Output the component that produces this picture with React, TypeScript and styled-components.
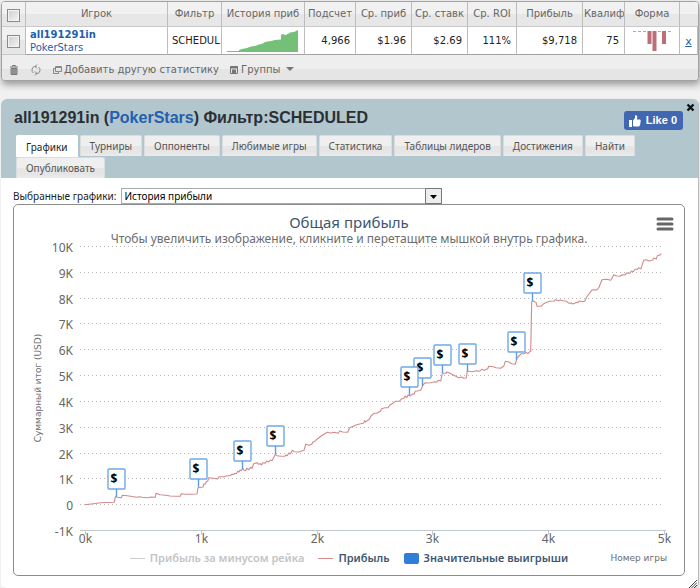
import React from 'react';
import styled, { createGlobalStyle } from 'styled-components';

const GlobalStyle = createGlobalStyle`
  *, *::before, *::after { box-sizing: border-box; }
  html { background: #f1f1f1; }
  body {
    margin: 0;
    font: 10px/12px 'DejaVu Sans', Verdana, sans-serif;
    color: #222;
    overflow-x: hidden;
  }
  a { color: #2360ad; }
`;

const Page = styled.main`
  padding: 1px 1px 0;
`;

/* ---------- player table ---------- */

const PlayerBox = styled.section`
  border: 1px solid #a2a2a2;
  border-radius: 4px;
  overflow: hidden;
  background: #e9e9e9;
  box-shadow: 1px 4px 7px rgba(0, 0, 0, 0.35);
`;

const PlayerTable = styled.table`
  width: 100%;
  table-layout: fixed;
  border-collapse: separate;
  border-spacing: 0;
  background: #fff;
`;

const HeadCell = styled.th`
  height: 25px;
  padding: 0 1px;
  border-right: 1px solid #bdbdbd;
  border-bottom: 1px solid #c9c9c9;
  background: linear-gradient(#f1f1f1 0 50%, #e7e7e7 50% 100%);
  color: #666;
  font-weight: 400;
  text-align: center;
  white-space: nowrap;
  overflow: hidden;
  &:last-child { border-right: 0; }
`;

const Cell = styled.td<{ $align?: 'left' | 'center' | 'right' }>`
  height: 28px;
  padding: 0 5px 0 4px;
  border-right: 1px solid #bdbdbd;
  border-bottom: 1px solid #a2a2a2;
  text-align: ${(p) => p.$align ?? 'right'};
  white-space: nowrap;
  overflow: hidden;
  &:last-child { padding: 2px 0 0; }
`;

const PlayerName = styled.a`
  display: block;
  line-height: 13px;
  font-weight: 700;
  text-decoration: none;
`;

const Network = styled.a`
  display: block;
  line-height: 13px;
  text-decoration: none;
`;

const Tick = styled.input`
  appearance: none;
  display: block;
  width: 13px;
  height: 13px;
  margin: 2px auto 0;
  border: 1px solid #8a8a8a;
  background: linear-gradient(135deg, #cdcdcd, #f6f6f6);
  box-shadow: inset 0 0 0 1px #f4f4f4;
  &:checked { background: #4c7fb8; }
`;

const CellGraphic = styled.svg`
  display: block;
  margin: 0 auto;
`;

const RemoveLink = styled.a`
  font-size: 11px;
`;

const Toolbar = styled.div`
  display: flex;
  align-items: center;
  gap: 10px;
  height: 25px;
  padding: 5px 6px 0;
  background: linear-gradient(#eeeeee 0 55%, #e5e5e5 55% 100%);
`;

const ToolButton = styled.button`
  display: flex;
  align-items: center;
  gap: 2px;
  padding: 0;
  border: 0;
  background: none;
  color: #666;
  font: inherit;
  cursor: pointer;
`;

/* ---------- detail panel ---------- */

const Panel = styled.section`
  position: relative;
  margin-top: 18px;
  margin-right: 1px;
  border-radius: 6px 6px 5px 5px;
  background: #fff;
  box-shadow: 1px 0 1px #b4b4b4;
`;

const PanelHeader = styled.header`
  padding: 7px 15px 0;
  border-radius: 6px 6px 0 0;
  background: #b2c6ce;
`;

const TitleRow = styled.div`
  display: flex;
  align-items: center;
  justify-content: space-between;
  height: 29px;
`;

const Title = styled.h1`
  margin: 0 0 6px -2px;
  font: 700 16px/20px 'Liberation Sans', Arial, sans-serif;
  color: #2b2f33;
  white-space: nowrap;
  a { text-decoration: none; }
`;

const LikeButton = styled.button`
  display: flex;
  align-items: center;
  gap: 5px;
  height: 19px;
  padding: 0 6px 0 5px;
  border: 0;
  border-radius: 3px;
  background: #4267b2;
  color: #fff;
  font: 700 11px/19px 'Liberation Sans', Arial, sans-serif;
  white-space: nowrap;
`;

const CloseButton = styled.button`
  position: absolute;
  top: 4px;
  right: 3px;
  display: flex;
  padding: 0;
  border: 0;
  background: none;
`;

const ResizeGrip = styled.svg`
  position: absolute;
  right: 1px;
  bottom: 0;
`;

const Tabs = styled.nav`
  display: flex;
  flex-wrap: wrap;
  gap: 1px 2px;
`;

const Tab = styled.button<{ $active?: boolean }>`
  height: ${(p) => (p.$active ? 22 : 21)}px;
  margin-bottom: ${(p) => (p.$active ? -1 : 0)}px;
  padding: 0 9px;
  border: 1px solid ${(p) => (p.$active ? '#fff' : '#dadcdd')};
  border-bottom-width: 0;
  border-radius: 2px 2px 0 0;
  background: ${(p) => (p.$active ? '#fff' : 'linear-gradient(#efefef 0 50%, #e5e5e5 50% 80%, #ececec)')};
  color: ${(p) => (p.$active ? '#222' : '#555')};
  font: 10px/14px 'Noto Sans', Tahoma, sans-serif;
`;

const PanelBody = styled.div`
  padding: 9px 13px 12px 12px;
`;

const ChartPicker = styled.div`
  display: flex;
  align-items: center;
  gap: 5px;
  height: 17px;
  font: 10px/14px 'Noto Sans', Tahoma, sans-serif;
`;

const SelectFrame = styled.div`
  position: relative;
  flex: 0 1 321px;
  display: flex;
`;

const Select = styled.select`
  appearance: none;
  width: 100%;
  height: 16px;
  padding: 0 20px 0 2px;
  border: 1px solid #aaa;
  border-radius: 0;
  background: #fff;
  color: #000;
  font: inherit;
`;

const SelectArrow = styled.svg`
  position: absolute;
  right: 0;
  top: 0;
  pointer-events: none;
`;

const ChartCard = styled.figure`
  margin: 0;
  position: relative;
  padding: 7px 0 9px;
  border: 1px solid #8c8c8c;
  border-radius: 5px;
  background: #fff;
  font: 12px/16px 'Noto Sans', 'Lucida Grande', sans-serif;
  color: #666;
`;

const ChartTitle = styled.figcaption`
  text-align: center;
  font-size: 15px;
  line-height: 20px;
  color: #3e576f;
`;

const ChartHint = styled.p`
  margin: 0;
  text-align: center;
  line-height: 14px;
  color: #6d6d6d;
`;

const MenuButton = styled.button`
  position: absolute;
  top: 12px;
  right: 10px;
  display: flex;
  padding: 0;
  border: 0;
  background: none;
`;

const Plot = styled.svg`
  display: block;
  width: 100%;
  height: auto;
  overflow: visible;
`;

const AxisLabel = styled.text`
  font: 12px 'Noto Sans', sans-serif;
  fill: #666;
`;

const AxisTitle = styled.text`
  font: 9px 'DejaVu Sans', sans-serif;
  fill: #6d6d6d;
`;

const Dollar = styled.text`
  font: 700 12px 'Noto Sans', sans-serif;
  fill: #000;
`;

const ChartFooter = styled.div`
  display: grid;
  grid-template-columns: 1fr auto 1fr;
  align-items: center;
  padding-top: 4px;
`;

const Legend = styled.div`
  grid-column: 2;
  display: flex;
  gap: 14px;
`;

const LegendItem = styled.button<{ $muted?: boolean }>`
  display: flex;
  align-items: center;
  gap: 5px;
  padding: 0;
  border: 0;
  background: none;
  color: ${(p) => (p.$muted ? '#c4c4c4' : '#3e576f')};
  font: 600 11px/16px 'Noto Sans', sans-serif;
  white-space: nowrap;
`;

const LineKey = styled.i<{ $color: string }>`
  width: 15px;
  height: 1px;
  background: ${(p) => p.$color};
`;

const BoxKey = styled.i`
  width: 15px;
  height: 11px;
  border-radius: 2px;
  background: #2f7ed8;
`;

const FooterAxisName = styled.span`
  justify-self: end;
  padding-right: 17px;
  font: 9px/14px 'DejaVu Sans', sans-serif;
  color: #6d6d6d;
  white-space: nowrap;
`;

/* ---------- data ---------- */

const columns: { title: string; width?: number }[] = [
  { title: 'Игрок' },
  { title: 'Фильтр', width: 54 },
  { title: 'История приб', width: 83 },
  { title: 'Подсчет', width: 51 },
  { title: 'Ср. приб', width: 56 },
  { title: 'Ср. ставк', width: 56 },
  { title: 'Ср. ROI', width: 49 },
  { title: 'Прибыль', width: 66 },
  { title: 'Квалиф', width: 42 },
  { title: 'Форма', width: 55 },
  { title: '', width: 18 },
];

const stats = ['$1.96', '$2.69', '111%', '$9,718', '75'];

const tabs = [
  'Графики', 'Турниры', 'Оппоненты', 'Любимые игры', 'Статистика',
  'Таблицы лидеров', 'Достижения', 'Найти', 'Опубликовать',
];

const yTicks = ['10K', '9K', '8K', '7K', '6K', '5K', '4K', '3K', '2K', '1K', '0', '-1K'];
const xTicks = ['0k', '1k', '2k', '3k', '4k', '5k'];
const gridY = (i: number) => Math.round(246 + i * 25.82) + 0.5;
const tickX = (i: number) => Math.round(85 + i * 115.8) + 0.5;

// Each stretch lists x,y pairs in thirds of a unit, counted from its own origin.
const stretch = (x0: number, y0: number, pairs: string) =>
  pairs
    .trim()
    .split(/\s+/)
    .map((p) => {
      const [x, y] = p.split(',').map(Number);
      return `${(x0 + x / 3).toFixed(1)},${(y0 + y / 3).toFixed(1)}`;
    })
    .join(' ');

const profit = [
  stretch(80, 400, `15,314 40,311 62,308 103,307 106,290 112,292 124,293 127,286 142,287 152,289 160,290
    170,292 178,290 186,292 200,293 214,291 226,292 228,280 240,284 258,286 270,288 288,289 301,289 304,281
    316,283 330,283 351,282 354,263 369,261 372,251 376,252 379,245 383,244 386,233 400,235 413,237 417,230
    432,230 442,227 450,227 457,222 461,224 464,220 469,221 473,214 477,216 480,210 484,212 488,204 491,210
    497,212 500,205 506,209 512,202 516,205 521,191 530,188 536,193 541,191 545,195 548,188 555,190 560,183
    566,186 571,180 576,182 580,175 586,163 590,167 602,169 614,169 618,165 622,167 626,159 631,162 637,151
    643,155 655,156`),
  stretch(300, 330, `5,363 12,361 17,343 27,346 36,342 38,337 46,333 50,328 56,324 60,320 68,315 82,307
    92,309 104,307 114,310 119,303 128,306 143,307 149,293 160,289 170,284 182,281 190,280 194,272 196,276
    208,268 213,258 222,250 230,250 241,244 245,236 255,233 264,233 270,225 280,219 286,214 298,214 304,207
    311,205 315,198 320,203 324,195 332,198 337,192 342,193 346,184 356,182 363,179 369,165 376,158 384,159
    392,158 404,155 410,157 415,151 422,153 427,130 437,130 441,126 450,130 466,138 476,143 484,141 492,145
    499,144 502,123 516,125 530,122 538,124 545,118 553,121 563,116 566,109 580,110 588,113 602,115 611,109
    616,94 626,96 636,101 646,103 651,84 657,78 664,71 672,71 678,67 684,71 690,64 693,60`),
  stretch(500, 240, `92,334 95,184 100,183 104,186 108,187 111,199 123,199 131,191 142,186 150,184 162,183
    166,179 176,182 181,180 190,182 200,184 207,190 214,189 218,192 224,190 230,187 233,188 238,183 248,185
    254,184 260,171 270,158 276,150 283,149 290,150 297,142 306,119 320,118 332,121 336,115 341,104 350,108
    360,109 366,104 374,105 380,99 390,100 394,93 400,95 405,88 412,88 416,83 423,86 431,61 438,59 448,63
    458,60 461,54 469,57 472,47 480,45 484,41`),
].join(' ');

const wins: [number, number][] = [
  [116, 497], [198, 487], [242, 469], [275, 454], [422, 386],
  [409, 395], [442, 373], [467, 372], [516, 360], [532, 301],
];

function WinMarker({ x, y }: { x: number; y: number }) {
  return (
    <g>
      <rect x={x - 8} y={y - 28} width="17" height="20" rx="1" fill="#fff" stroke="#6fa8e8" strokeWidth="1.4" />
      <path d={`M${x + 0.5} ${y - 8}V${y}`} stroke="#5f9ce0" strokeWidth="1.4" />
      <Dollar x={x - 2} y={y - 14} textAnchor="middle">$</Dollar>
    </g>
  );
}

function ProfitChart() {
  return (
    <Plot viewBox="14 246 670 300" role="img" aria-label="Общая прибыль">
      {yTicks.map((label, i) => (
        <g key={label}>
          {i < 11 ? (
            <path d={`M80 ${gridY(i)}H664`} stroke="#b8b8b8" strokeDasharray="1 3" />
          ) : (
            <path d={`M80 ${gridY(i)}H666`} stroke="#c0c8d0" />
          )}
          <AxisLabel x="73" y={gridY(i) + 5} textAnchor="end">{label}</AxisLabel>
        </g>
      ))}
      {xTicks.map((label, i) => (
        <g key={label}>
          <path d={`M${tickX(i)} 530V535`} stroke="#c0c8d0" />
          <AxisLabel x={tickX(i)} y="543" textAnchor="middle">{label}</AxisLabel>
        </g>
      ))}
      <AxisTitle transform="translate(41 388) rotate(-90)" textAnchor="middle">Суммарный итог (USD)</AxisTitle>
      <polyline points={profit} fill="none" stroke="#d28a8a" strokeWidth="1.1" strokeLinejoin="round" />
      {wins.map(([x, y]) => <WinMarker key={x} x={x} y={y} />)}
    </Plot>
  );
}

function HistorySparkline() {
  return (
    <CellGraphic width="71" height="22" viewBox="0 0 71 22">
      <path
        d="M0 22V21H12V20L15 19L20 18L24 16.5L28 16L32 14.5L36 13.5L38 12L44 11L48 10L54 9.5V5L56 4L58 5L61 4L63 2.5L67 2L71 0V22Z"
        fill="#74c078"
      />
    </CellGraphic>
  );
}

function FormGraphic() {
  return (
    <CellGraphic width="38" height="22" viewBox="0 0 38 22">
      <path d="M0 1.5H38" stroke="#cf9a9d" strokeDasharray="3 2" />
      <path d="M14.5 1h4v13h-4zM19.5 1h4v20h-4zM29 1h4v13h-4z" fill="#bd6f76" />
    </CellGraphic>
  );
}

export default function App() {
  return (
    <>
      <GlobalStyle />
      <Page>
        <PlayerBox>
          <PlayerTable>
            <colgroup>
              <col width={24} />
              {columns.map((c) => <col key={c.title} width={c.width} />)}
            </colgroup>
            <thead>
              <tr>
                <HeadCell><Tick type="checkbox" aria-label="Выбрать всех" /></HeadCell>
                {columns.map((c) => (
                  <HeadCell key={c.title}>{c.title}</HeadCell>
                ))}
              </tr>
            </thead>
            <tbody>
              <tr>
                <HeadCell as="td"><Tick type="checkbox" aria-label="Выбрать all191291in" /></HeadCell>
                <Cell $align="left">
                  <PlayerName href="#player">all191291in</PlayerName>
                  <Network href="#network">PokerStars</Network>
                </Cell>
                <Cell $align="left">SCHEDUL</Cell>
                <Cell $align="center"><HistorySparkline /></Cell>
                <Cell>4,966</Cell>
                {stats.map((s) => <Cell key={s}>{s}</Cell>)}
                <Cell $align="center"><FormGraphic /></Cell>
                <Cell $align="center"><RemoveLink href="#remove">x</RemoveLink></Cell>
              </tr>
            </tbody>
          </PlayerTable>
          <Toolbar>
            <ToolButton aria-label="Удалить">
              <svg width="12" height="12" viewBox="0 0 12 12" fill="none" stroke="#777">
                <path d="M2 3h8M4.500 2.500v-1h3v1" />
                <path d="M3 4.500h6v6H3z" fill="#aaa" />
                <path d="M5 5v5M7 5v5" />
              </svg>
            </ToolButton>
            <ToolButton aria-label="Обновить">
              <svg width="12" height="12" viewBox="0 0 12 12" fill="none" stroke="#888">
                <path d="M6.500 2.500h-2a3 3.500 0 0 0-1 6.500M5.500 9.500h2a3 3.500 0 0 0 1-6.500M7 0.500 5 2.500l2 2M5 7.500l2 2-2 2" />
              </svg>
            </ToolButton>
            <ToolButton>
              <svg width="10" height="10" viewBox="0 0 10 10" fill="none" stroke="#888">
                <path d="M3.500 1.500h6v5h-6zM3 3.500H1.500v5h5V7M3.500 2.500h6" />
              </svg>
              Добавить другую статистику
            </ToolButton>
            <ToolButton>
              <svg width="10" height="10" viewBox="0 0 10 10" fill="none" stroke="#777">
                <path d="M1.500 1.500h7v7h-7z" />
                <path d="M1 2.500h8M3 5.500h4M3 7.500h4" strokeWidth="2" />
              </svg>
              Группы
              <svg width="13" height="10" viewBox="0 0 13 10">
                <path d="M4 2h8L8 6z" fill="#777" />
              </svg>
            </ToolButton>
          </Toolbar>
        </PlayerBox>

        <Panel>
          <PanelHeader>
            <TitleRow>
              <Title>all191291in (<a href="#network">PokerStars</a>) Фильтр:SCHEDULED</Title>
              <LikeButton>
                <svg width="12" height="12" viewBox="0 0 12 12" fill="#fff">
                  <path d="M0 5h3v7H0zM4 5.500 6 3V0.500C7.500 0 8.500 1 8.200 2.500L7.800 4.500H11Q12 5 11.700 6T11.400 8 11 10 10 11.500H5.500L4 11z" />
                </svg>
                Like 0
              </LikeButton>
            </TitleRow>
            <Tabs>
              {tabs.map((t, i) => <Tab key={t} $active={i === 0}>{t}</Tab>)}
            </Tabs>
          </PanelHeader>
          <CloseButton aria-label="Закрыть">
            <svg width="9" height="9" viewBox="0 0 9 9" stroke="#111" strokeWidth="2.400">
              <path d="M1.500 1.500l6 6M7.500 1.500l-6 6" />
            </svg>
          </CloseButton>

          <PanelBody>
            <ChartPicker>
              <label htmlFor="chart">Выбранные графики:</label>
              <SelectFrame>
                <Select id="chart"><option>История прибыли</option></Select>
                <SelectArrow width="17" height="16" viewBox="0 0 17 16">
                  <path d="M.5.5h16v15H.5z" fill="#ededed" stroke="#777" />
                  <path d="M5 7h7l-3.500 4z" fill="#000" />
                </SelectArrow>
              </SelectFrame>
            </ChartPicker>
            <ChartCard>
              <ChartTitle>Общая прибыль</ChartTitle>
              <ChartHint>Чтобы увеличить изображение, кликните и перетащите мышкой внутрь графика.</ChartHint>
              <MenuButton aria-label="Меню графика">
                <svg width="18" height="14" viewBox="0 0 18 14" stroke="#666" strokeWidth="3" strokeLinecap="round">
                  <path d="M2 2h14M2 7h14M2 12h14" />
                </svg>
              </MenuButton>
              <ProfitChart />
              <ChartFooter>
                <Legend>
                  <LegendItem $muted><LineKey $color="#ccc" />Прибыль за минусом рейка</LegendItem>
                  <LegendItem><LineKey $color="#d28a8a" />Прибыль</LegendItem>
                  <LegendItem><BoxKey />Значительные выигрыши</LegendItem>
                </Legend>
                <FooterAxisName>Номер игры</FooterAxisName>
              </ChartFooter>
            </ChartCard>
          </PanelBody>
          <ResizeGrip width="8" height="8" viewBox="0 0 8 8" stroke="#444">
            <path d="M0 8l8-8M2.500 8l5.500-5.500M5 8l3-3" />
          </ResizeGrip>
        </Panel>
      </Page>
    </>
  );
}
